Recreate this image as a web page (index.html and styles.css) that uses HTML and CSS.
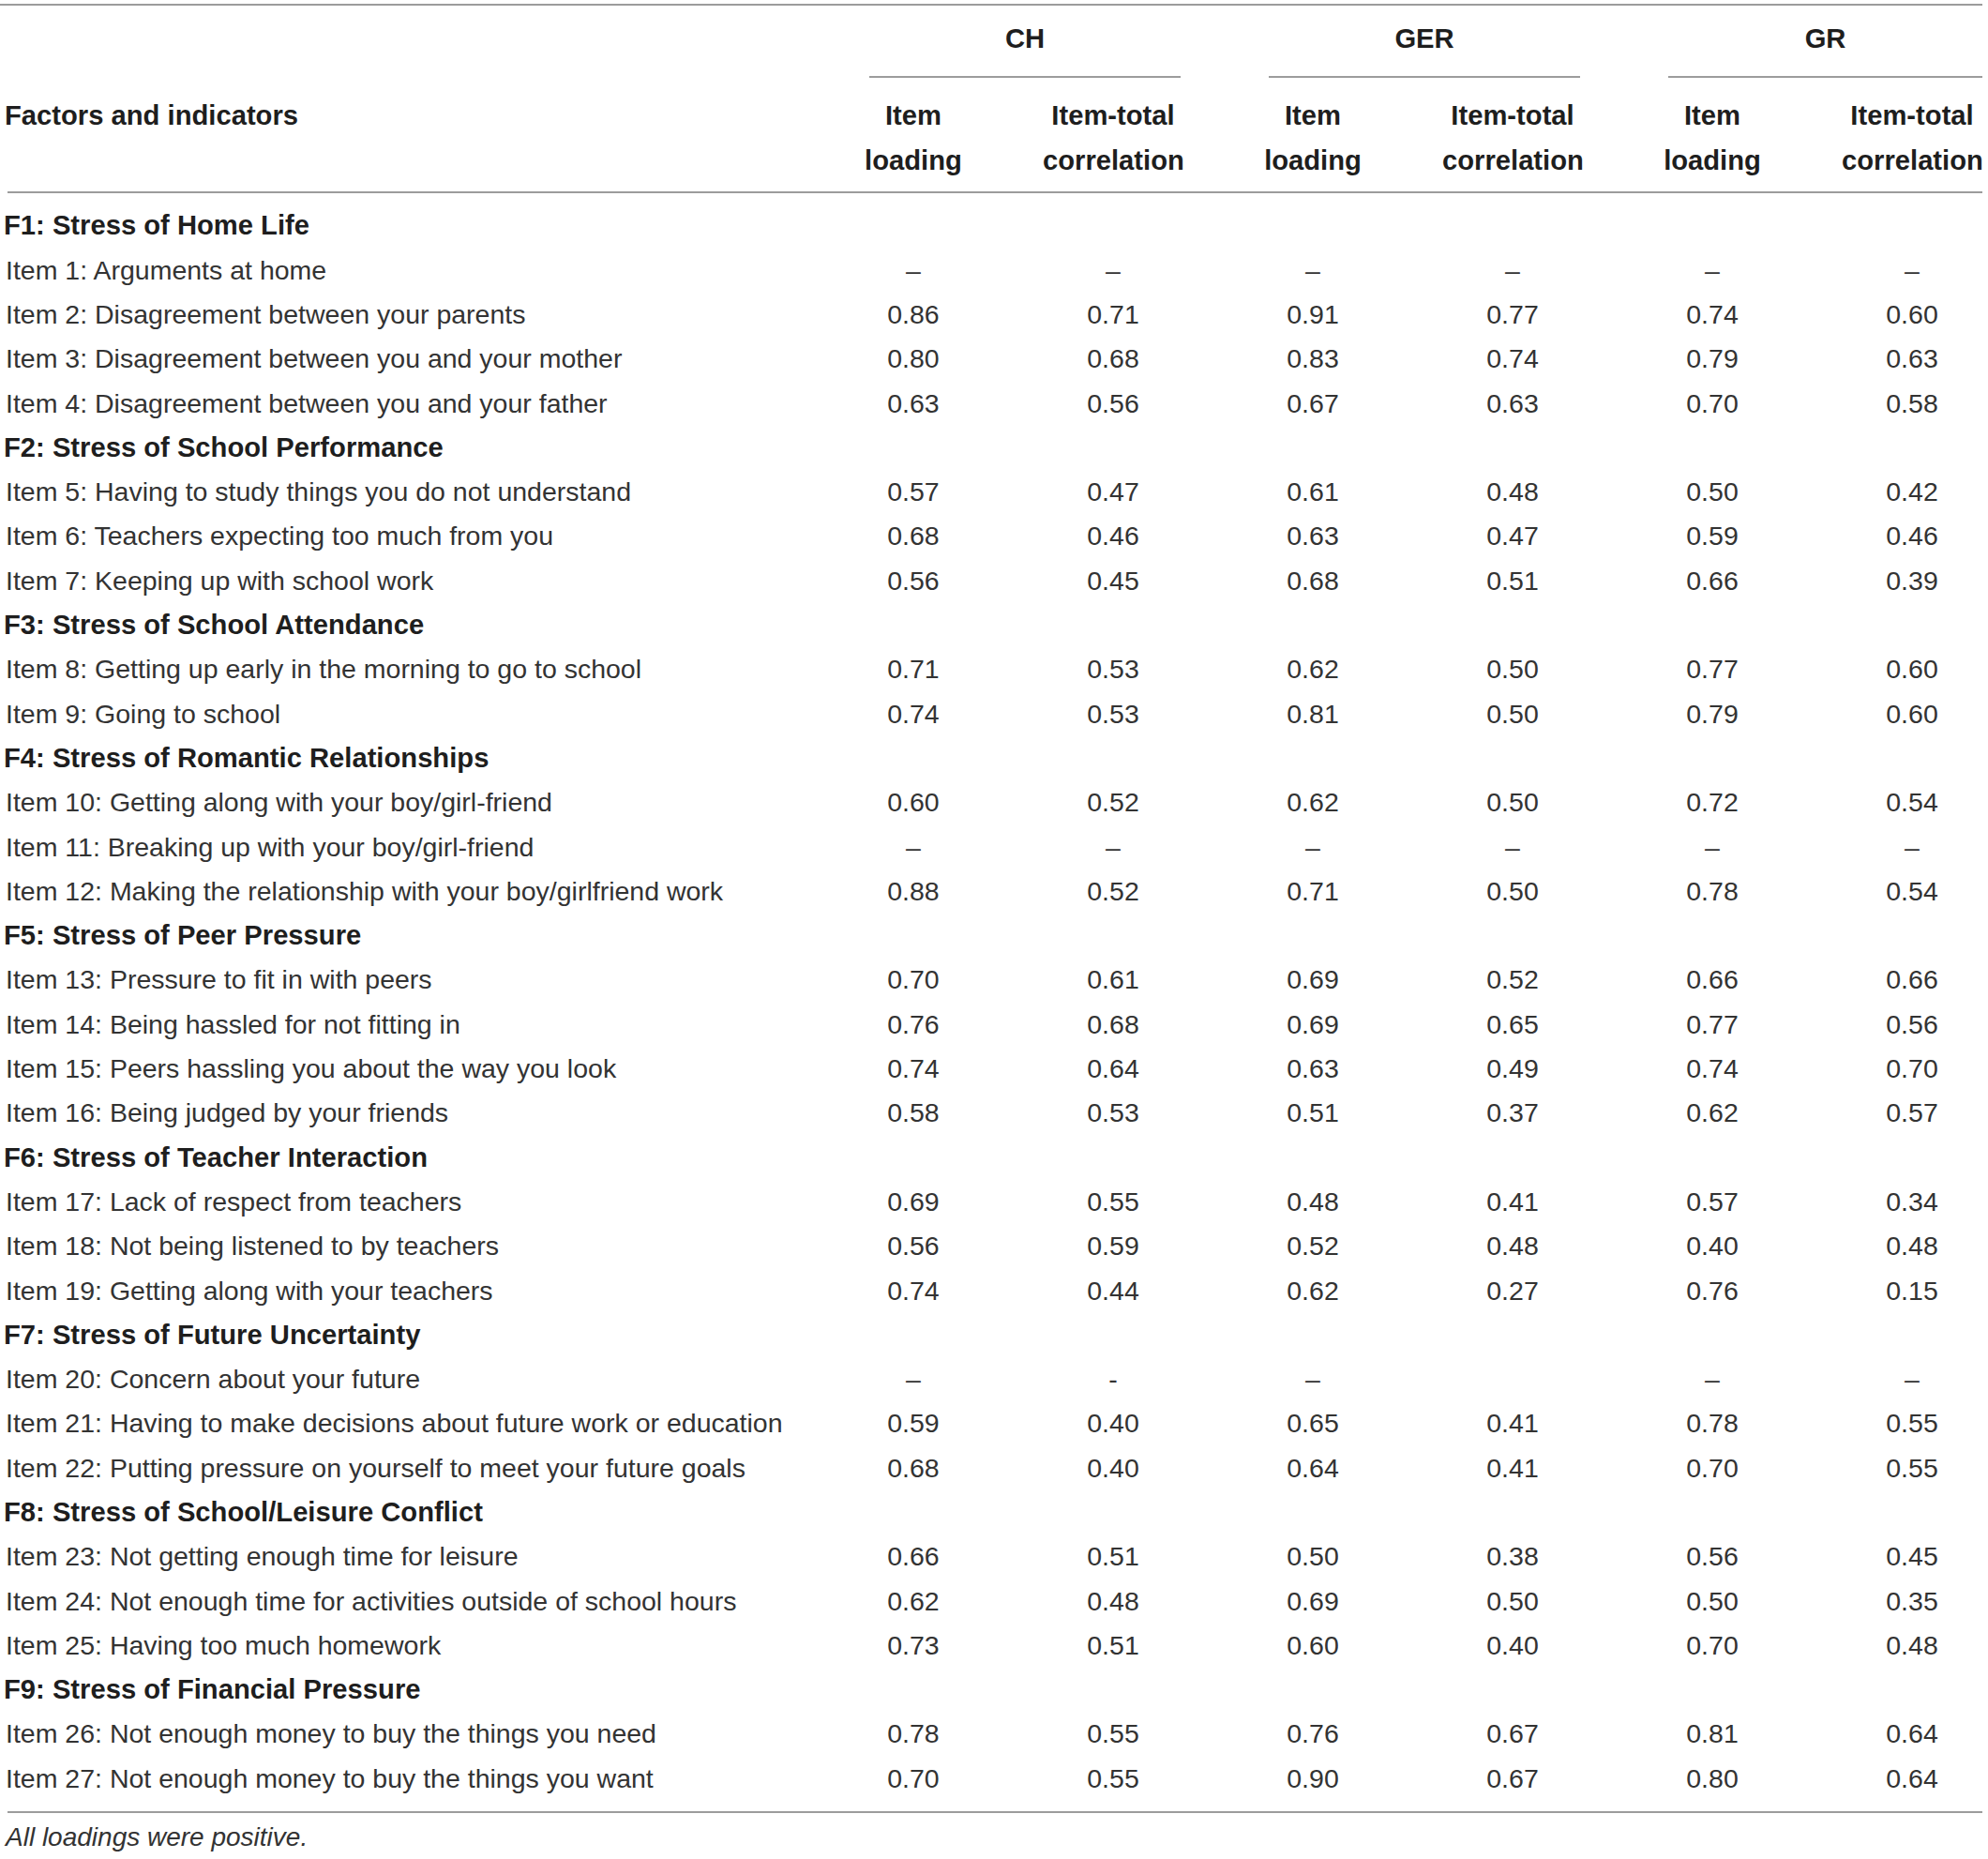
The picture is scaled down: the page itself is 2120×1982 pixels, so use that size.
FILE: index.html
```html
<!DOCTYPE html>
<html lang="en">

<head>
    <meta charset="UTF-8">
    <meta name="viewport" content="width=device-width, initial-scale=1.0">
    <title>Item loadings and item-total correlations</title>
    <link rel="stylesheet" href="styles.css">
</head>

<body>
    <div class="table-wrap">
        <table class="loadings">
            <colgroup>
                <col class="col-label">
                <col class="col-load">
                <col class="col-corr">
                <col class="col-load">
                <col class="col-corr">
                <col class="col-load">
                <col class="col-corr">
            </colgroup>
            <thead>
                <tr class="group-row">
                    <th></th>
                    <th colspan="2" class="group"><div class="group-name">CH</div></th>
                    <th colspan="2" class="group"><div class="group-name">GER</div></th>
                    <th colspan="2" class="group"><div class="group-name last">GR</div></th>
                </tr>
                <tr class="sub-row">
                    <th class="label">Factors and indicators</th>
                    <th>Item<br>loading</th>
                    <th>Item-total<br>correlation</th>
                    <th>Item<br>loading</th>
                    <th>Item-total<br>correlation</th>
                    <th>Item<br>loading</th>
                    <th>Item-total<br>correlation</th>
                </tr>
            </thead>
            <tbody>
                <tr class="factor first"><td colspan="7">F1: Stress of Home Life</td></tr>
                <tr><td class="label">Item 1: Arguments at home</td><td>–</td><td>–</td><td>–</td><td>–</td><td>–</td><td>–</td></tr>
                <tr><td class="label">Item 2: Disagreement between your parents</td><td>0.86</td><td>0.71</td><td>0.91</td><td>0.77</td><td>0.74</td><td>0.60</td></tr>
                <tr><td class="label">Item 3: Disagreement between you and your mother</td><td>0.80</td><td>0.68</td><td>0.83</td><td>0.74</td><td>0.79</td><td>0.63</td></tr>
                <tr><td class="label">Item 4: Disagreement between you and your father</td><td>0.63</td><td>0.56</td><td>0.67</td><td>0.63</td><td>0.70</td><td>0.58</td></tr>

                <tr class="factor"><td colspan="7">F2: Stress of School Performance</td></tr>
                <tr><td class="label">Item 5: Having to study things you do not understand</td><td>0.57</td><td>0.47</td><td>0.61</td><td>0.48</td><td>0.50</td><td>0.42</td></tr>
                <tr><td class="label">Item 6: Teachers expecting too much from you</td><td>0.68</td><td>0.46</td><td>0.63</td><td>0.47</td><td>0.59</td><td>0.46</td></tr>
                <tr><td class="label">Item 7: Keeping up with school work</td><td>0.56</td><td>0.45</td><td>0.68</td><td>0.51</td><td>0.66</td><td>0.39</td></tr>

                <tr class="factor"><td colspan="7">F3: Stress of School Attendance</td></tr>
                <tr><td class="label">Item 8: Getting up early in the morning to go to school</td><td>0.71</td><td>0.53</td><td>0.62</td><td>0.50</td><td>0.77</td><td>0.60</td></tr>
                <tr><td class="label">Item 9: Going to school</td><td>0.74</td><td>0.53</td><td>0.81</td><td>0.50</td><td>0.79</td><td>0.60</td></tr>

                <tr class="factor"><td colspan="7">F4: Stress of Romantic Relationships</td></tr>
                <tr><td class="label">Item 10: Getting along with your boy/girl-friend</td><td>0.60</td><td>0.52</td><td>0.62</td><td>0.50</td><td>0.72</td><td>0.54</td></tr>
                <tr><td class="label">Item 11: Breaking up with your boy/girl-friend</td><td>–</td><td>–</td><td>–</td><td>–</td><td>–</td><td>–</td></tr>
                <tr><td class="label">Item 12: Making the relationship with your boy/girlfriend work</td><td>0.88</td><td>0.52</td><td>0.71</td><td>0.50</td><td>0.78</td><td>0.54</td></tr>

                <tr class="factor"><td colspan="7">F5: Stress of Peer Pressure</td></tr>
                <tr><td class="label">Item 13: Pressure to fit in with peers</td><td>0.70</td><td>0.61</td><td>0.69</td><td>0.52</td><td>0.66</td><td>0.66</td></tr>
                <tr><td class="label">Item 14: Being hassled for not fitting in</td><td>0.76</td><td>0.68</td><td>0.69</td><td>0.65</td><td>0.77</td><td>0.56</td></tr>
                <tr><td class="label">Item 15: Peers hassling you about the way you look</td><td>0.74</td><td>0.64</td><td>0.63</td><td>0.49</td><td>0.74</td><td>0.70</td></tr>
                <tr><td class="label">Item 16: Being judged by your friends</td><td>0.58</td><td>0.53</td><td>0.51</td><td>0.37</td><td>0.62</td><td>0.57</td></tr>

                <tr class="factor"><td colspan="7">F6: Stress of Teacher Interaction</td></tr>
                <tr><td class="label">Item 17: Lack of respect from teachers</td><td>0.69</td><td>0.55</td><td>0.48</td><td>0.41</td><td>0.57</td><td>0.34</td></tr>
                <tr><td class="label">Item 18: Not being listened to by teachers</td><td>0.56</td><td>0.59</td><td>0.52</td><td>0.48</td><td>0.40</td><td>0.48</td></tr>
                <tr><td class="label">Item 19: Getting along with your teachers</td><td>0.74</td><td>0.44</td><td>0.62</td><td>0.27</td><td>0.76</td><td>0.15</td></tr>

                <tr class="factor"><td colspan="7">F7: Stress of Future Uncertainty</td></tr>
                <tr><td class="label">Item 20: Concern about your future</td><td>–</td><td>-</td><td>–</td><td></td><td>–</td><td>–</td></tr>
                <tr><td class="label">Item 21: Having to make decisions about future work or education</td><td>0.59</td><td>0.40</td><td>0.65</td><td>0.41</td><td>0.78</td><td>0.55</td></tr>
                <tr><td class="label">Item 22: Putting pressure on yourself to meet your future goals</td><td>0.68</td><td>0.40</td><td>0.64</td><td>0.41</td><td>0.70</td><td>0.55</td></tr>

                <tr class="factor"><td colspan="7">F8: Stress of School/Leisure Conflict</td></tr>
                <tr><td class="label">Item 23: Not getting enough time for leisure</td><td>0.66</td><td>0.51</td><td>0.50</td><td>0.38</td><td>0.56</td><td>0.45</td></tr>
                <tr><td class="label">Item 24: Not enough time for activities outside of school hours</td><td>0.62</td><td>0.48</td><td>0.69</td><td>0.50</td><td>0.50</td><td>0.35</td></tr>
                <tr><td class="label">Item 25: Having too much homework</td><td>0.73</td><td>0.51</td><td>0.60</td><td>0.40</td><td>0.70</td><td>0.48</td></tr>

                <tr class="factor"><td colspan="7">F9: Stress of Financial Pressure</td></tr>
                <tr><td class="label">Item 26: Not enough money to buy the things you need</td><td>0.78</td><td>0.55</td><td>0.76</td><td>0.67</td><td>0.81</td><td>0.64</td></tr>
                <tr class="last"><td class="label">Item 27: Not enough money to buy the things you want</td><td>0.70</td><td>0.55</td><td>0.90</td><td>0.67</td><td>0.80</td><td>0.64</td></tr>
            </tbody>
        </table>
        <p class="footnote">All loadings were positive.</p>
    </div>
</body>

</html>
```

FILE: styles.css
```css
body {
    margin: 0;
    padding: 0;
    background-color: #fff;
    color: #333;
    font-family: "Liberation Sans", Arial, sans-serif;
}

.table-wrap {
    width: 2114px;
    margin-top: 4px;
    border-top: 2px solid #9c9c9c;
}

.loadings {
    margin-left: 8px;
    width: 2106px;
    border-collapse: collapse;
    table-layout: fixed;
    font-size: 28.5px;
}

.col-label {
    width: 828px;
}

.col-load {
    width: 276px;
}

.col-corr {
    width: 150px;
}

th,
td {
    padding: 0;
    line-height: 47.3px;
    white-space: nowrap;
    text-align: center;
    vertical-align: top;
}

th {
    font-size: 29.2px;
    font-weight: bold;
    color: #1e1e1e;
}

/* header */
.group-row th {
    padding-top: 12px;
}

.group-name {
    margin: 0 3px 0 91px;
    padding-bottom: 16px;
    border-bottom: 2px solid #9c9c9c;
}

.group-name.last {
    margin-right: 0;
}

.sub-row th {
    padding-top: 17px;
    padding-bottom: 9px;
    border-bottom: 2px solid #9c9c9c;
}

.label {
    text-align: left;
    text-indent: -2px;
}

th.label {
    text-indent: -3px;
}

/* body */
.factor td {
    text-align: left;
    font-size: 29.2px;
    font-weight: bold;
    color: #1e1e1e;
    text-indent: -4px;
}

.factor.first td {
    padding-top: 11.5px;
}

.last td {
    padding-bottom: 11px;
    border-bottom: 2px solid #9c9c9c;
}

.footnote {
    margin: 8px 0 0 8px;
    font-size: 28px;
    font-style: italic;
    line-height: 36px;
    text-indent: -2px;
}
```
